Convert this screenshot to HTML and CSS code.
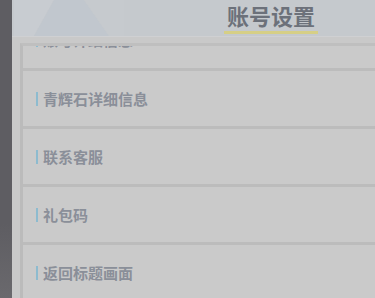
FILE: index.html
```
<!DOCTYPE html>
<html lang="zh-CN">
<head>
    <meta charset="UTF-8">
    <meta name="viewport" content="width=device-width, initial-scale=1.0">
    <title>账号设置</title>
    <link rel="stylesheet" href="styles.css">
</head>
<body>
    <div class="screen">
        <div class="side"></div>
        <div class="panel">
            <div class="header">
                <svg class="deco" width="110" height="36" viewBox="0 0 110 36">
                    <polygon points="0,0 40,0 20,36 0,36" fill="#c8ccd1"/>
                    <polygon points="40,0 70,0 95,36 20,36" fill="#c1c7ce"/>
                    <polygon points="70,0 110,0 110,36 95,36" fill="#c6cace"/>
                </svg>
                <div class="title">账号设置</div>
            </div>
            <div class="list">
                <div class="list-inner">
                    <div class="row row-cut"><span class="label">账号详细信息</span></div>
                    <div class="row"><span class="label">青辉石详细信息</span></div>
                    <div class="row"><span class="label">联系客服</span></div>
                    <div class="row"><span class="label">礼包码</span></div>
                    <div class="row"><span class="label">返回标题画面</span></div>
                </div>
            </div>
        </div>
    </div>
</body>
</html>
```

FILE: styles.css
```
body {
    margin: 0;
    background-color: #c9c9c9;
    font-family: "Noto Sans CJK SC", "Noto Sans", sans-serif;
}
.screen {
    display: flex;
    width: 375px;
    height: 298px;
    overflow: hidden;
}
.side {
    width: 12px;
    flex-shrink: 0;
    background: linear-gradient(#5e5d62, #5e5d62 75%, #6a696d);
}
.panel {
    flex: 1;
    display: flex;
    flex-direction: column;
    background-color: #c9c9c9;
    min-width: 0;
}
.header {
    position: relative;
    height: 36px;
    flex-shrink: 0;
    background-color: #c5c9cd;
    border-bottom: 1px solid #cfd0d2;
}
.deco {
    position: absolute;
    left: 2px;
    top: 0;
}
.title {
    position: absolute;
    left: 212px;
    top: 0;
    width: 94px;
    height: 31px;
    text-align: center;
    font-size: 22px;
    font-weight: bold;
    line-height: 30px;
    color: #6c717a;
    border-bottom: 3px solid #d6cf86;
}
.list {
    flex: 1;
    margin-top: 6px;
    margin-left: 8px;
    border-left: 3px solid #bbbbbb;
    border-top: 3px solid #bfbfbf;
    overflow: hidden;
}
.list-inner {
    margin-top: -33px;
}
.row {
    height: 55px;
    display: flex;
    align-items: center;
    border-bottom: 3.5px solid #bcbcbc;
    background-color: #cacaca;
}
.row-cut .label {
    margin-bottom: 2px;
}
.label {
    margin-left: 13px;
    padding-left: 5px;
    border-left: 2px solid #8dbbcf;
    font-size: 15px;
    font-weight: bold;
    line-height: 14px;
    color: #8a8f99;
}
```
